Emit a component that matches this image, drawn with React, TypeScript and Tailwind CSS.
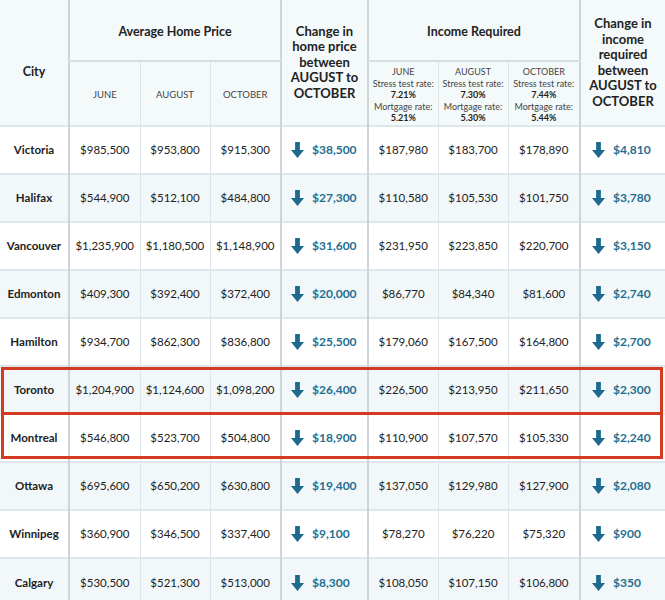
import React from 'react';

type Row = {
  city: string;
  price: [string, string, string];
  priceDrop: string;
  income: [string, string, string];
  incomeDrop: string;
};

const ROWS: Row[] = [
  { city: 'Victoria', price: ['$985,500', '$953,800', '$915,300'], priceDrop: '$38,500', income: ['$187,980', '$183,700', '$178,890'], incomeDrop: '$4,810' },
  { city: 'Halifax', price: ['$544,900', '$512,100', '$484,800'], priceDrop: '$27,300', income: ['$110,580', '$105,530', '$101,750'], incomeDrop: '$3,780' },
  { city: 'Vancouver', price: ['$1,235,900', '$1,180,500', '$1,148,900'], priceDrop: '$31,600', income: ['$231,950', '$223,850', '$220,700'], incomeDrop: '$3,150' },
  { city: 'Edmonton', price: ['$409,300', '$392,400', '$372,400'], priceDrop: '$20,000', income: ['$86,770', '$84,340', '$81,600'], incomeDrop: '$2,740' },
  { city: 'Hamilton', price: ['$934,700', '$862,300', '$836,800'], priceDrop: '$25,500', income: ['$179,060', '$167,500', '$164,800'], incomeDrop: '$2,700' },
  { city: 'Toronto', price: ['$1,204,900', '$1,124,600', '$1,098,200'], priceDrop: '$26,400', income: ['$226,500', '$213,950', '$211,650'], incomeDrop: '$2,300' },
  { city: 'Montreal', price: ['$546,800', '$523,700', '$504,800'], priceDrop: '$18,900', income: ['$110,900', '$107,570', '$105,330'], incomeDrop: '$2,240' },
  { city: 'Ottawa', price: ['$695,600', '$650,200', '$630,800'], priceDrop: '$19,400', income: ['$137,050', '$129,980', '$127,900'], incomeDrop: '$2,080' },
  { city: 'Winnipeg', price: ['$360,900', '$346,500', '$337,400'], priceDrop: '$9,100', income: ['$78,270', '$76,220', '$75,320'], incomeDrop: '$900' },
  { city: 'Calgary', price: ['$530,500', '$521,300', '$513,000'], priceDrop: '$8,300', income: ['$108,050', '$107,150', '$106,800'], incomeDrop: '$350' },
];

const RATES = [
  { month: 'JUNE', stress: '7.21%', mortgage: '5.21%' },
  { month: 'AUGUST', stress: '7.30%', mortgage: '5.30%' },
  { month: 'OCTOBER', stress: '7.44%', mortgage: '5.44%' },
];

function DownArrow() {
  return (
    <svg width="13" height="16" viewBox="0 0 13 16" className="shrink-0">
      <path d="M4.1 0 H8.9 V8 H13 L6.5 16 L0 8 H4.1 Z" fill="#1d6a8c" />
    </svg>
  );
}

function Drop({ value }: { value: string }) {
  return (
    <div className="flex items-center gap-[8px]">
      <DownArrow />
      <span className="text-[12px] font-bold text-[#1f6f90]">{value}</span>
    </div>
  );
}

// thin inner line vs. thicker group line
const thin = 'border-l border-l-[#dde5e8]';
const thick = 'border-l-2 border-l-[#ccd6da]';

export default function App() {
  return (
    <div className="relative w-[665px] h-[600px] overflow-hidden bg-white text-[#222] font-['Lato','Liberation_Sans',sans-serif]">
      <table className="w-[665px] table-fixed border-collapse">
        <colgroup>
          <col className="w-[69px]" />
          <col className="w-[71px]" />
          <col className="w-[70px]" />
          <col className="w-[71px]" />
          <col className="w-[87px]" />
          <col className="w-[70px]" />
          <col className="w-[70px]" />
          <col className="w-[72px]" />
          <col className="w-[85px]" />
        </colgroup>
        <thead className="bg-[#f4f9fa]">
          <tr className="h-[61px]">
            <th rowSpan={2} className="pt-[20px] text-[12.5px] font-bold align-middle">City</th>
            <th colSpan={3} className={`${thick} border-b-2 border-b-[#d6dfe2] pt-[4px] text-[12.5px] font-bold`}>
              Average Home Price
            </th>
            <th rowSpan={2} className={`${thick} text-[13px] font-bold leading-[15.5px] px-1`}>
              Change in home price between AUGUST to OCTOBER
            </th>
            <th colSpan={3} className={`${thick} border-b-2 border-b-[#d6dfe2] pt-[4px] text-[12.5px] font-bold`}>
              Income Required
            </th>
            <th rowSpan={2} className={`${thick} text-[13px] font-bold leading-[15.5px] px-1`}>
              Change in income required between AUGUST to OCTOBER
            </th>
          </tr>
          <tr className="h-[65px]">
            {RATES.map((r, i) => (
              <th key={r.month} className={`${i === 0 ? thick : thin} pt-[4px] text-[9.5px] font-normal text-[#444]`}>
                {r.month}
              </th>
            ))}
            {RATES.map((r, i) => (
              <th key={r.month} className={`${i === 0 ? thick : thin} pt-[3px] text-[9px] font-normal leading-[11.5px] text-[#444]`}>
                <div>{r.month}</div>
                <div>Stress test rate:</div>
                <div className="font-bold text-[#222]">{r.stress}</div>
                <div>Mortgage rate:</div>
                <div className="font-bold text-[#222]">{r.mortgage}</div>
              </th>
            ))}
          </tr>
        </thead>
        <tbody>
          {ROWS.map((row, idx) => (
            <tr key={row.city} className={`h-[48px] border-t-2 border-t-[#dfe7ea] ${idx % 2 === 1 ? 'bg-[#f2f8f9]' : 'bg-white'}`}>
              <td className="text-center text-[11.5px] font-bold">{row.city}</td>
              {row.price.map((p, i) => (
                <td key={i} className={`${i === 0 ? thick : thin} text-center text-[11.5px]`}>{p}</td>
              ))}
              <td className={`${thick} pl-[9px]`}>
                <Drop value={row.priceDrop} />
              </td>
              {row.income.map((p, i) => (
                <td key={i} className={`${i === 0 ? thick : thin} text-center text-[11.5px]`}>{p}</td>
              ))}
              <td className={`${thick} pl-[11px]`}>
                <Drop value={row.incomeDrop} />
              </td>
            </tr>
          ))}
        </tbody>
      </table>
      {/* highlight around Toronto and Montreal */}
      <div className="absolute left-[1px] top-[367px] w-[662px] h-[92px] border-[3px] border-[#d23a22] pointer-events-none" />
      <div className="absolute left-[1px] top-[412px] w-[662px] h-[3px] bg-[#d23a22] pointer-events-none" />
    </div>
  );
}
